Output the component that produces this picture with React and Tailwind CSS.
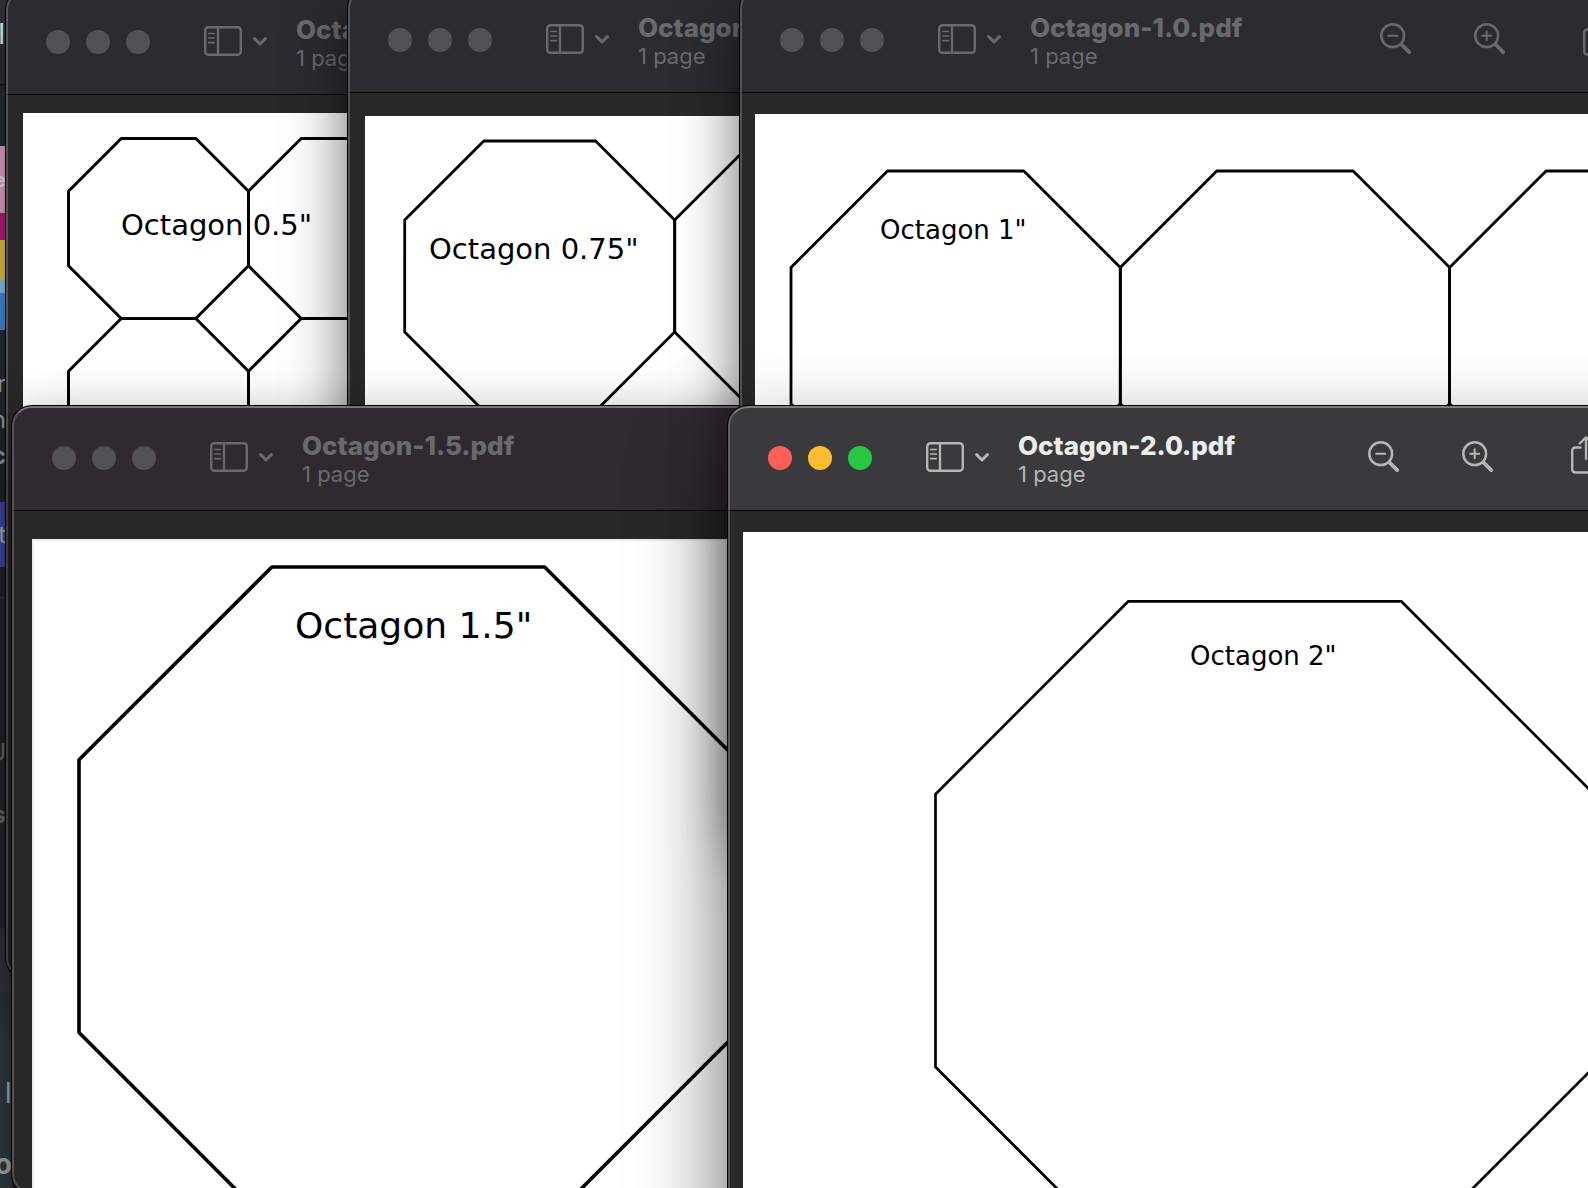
import clsx from "clsx";

const windows = [
  {
    title: "Octagon-0.5.pdf",
    frame: "left-[6px] top-[-10px] w-[900px] h-[988px]",
    bar: "bg-[#2b2c31]",
    inset: "pl-[17px] pt-[18px]",
    sheet: { x: 45.5, y: 25.5, size: 180, cols: 4, rows: 5, stroke: 3 },
    label: { text: 'Octagon 0.5"', x: 98, y: 122, size: 29 },
  },
  {
    title: "Octagon-0.75.pdf",
    frame: "left-[348px] top-[-12px] w-[900px] h-[842px]",
    bar: "bg-[#2b2c31]",
    inset: "pl-[17px] pt-[23px]",
    sheet: { x: 39.7, y: 25, size: 270, cols: 3, rows: 3, stroke: 2.8 },
    label: { text: 'Octagon 0.75"', x: 64, y: 143, size: 29 },
  },
  {
    title: "Octagon-1.5.pdf",
    frame: "left-3 top-[406px] w-[1300px] h-[788px]",
    bar: "bg-[#302a30]",
    inset: "pl-5 pt-7",
    page: "border-l-2 border-t-2 border-[#ededed]",
    sheet: { x: 45, y: 26, size: 658.4, cols: 1, rows: 1, stroke: 3.6 },
    label: { text: 'Octagon 1.5"', x: 261, y: 97, size: 36 },
  },
  {
    title: "Octagon-1.0.pdf",
    frame: "left-[740px] top-[-12px] w-[1200px] h-[842px]",
    bar: "bg-[#2c2b2f]",
    inset: "pl-[15px] pt-[21px]",
    sheet: { x: 36, y: 57, size: 329.3, cols: 3, rows: 2, stroke: 2.8 },
    label: { text: 'Octagon 1"', x: 125, y: 125, size: 26 },
  },
  {
    title: "Octagon-2.0.pdf",
    active: true,
    frame: "left-[728px] top-[406px] w-[1200px] h-[1000px]",
    bar: "bg-[#3a3a3c]",
    inset: "pl-[15px] pt-[21px]",
    sheet: { x: 192.5, y: 69.3, size: 658.6, cols: 1, rows: 1, stroke: 2.7 },
    label: { text: 'Octagon 2"', x: 447, y: 133, size: 26 },
  },
];

function SidebarIcon() {
  return (
    <svg width="38" height="30" viewBox="0 0 38 30" fill="none" stroke="currentColor">
      <rect x="1.2" y="1.2" width="35.6" height="27.6" rx="3.4" strokeWidth="2.4" />
      <path d="M14 1.5v27" strokeWidth="2.3" />
      <path d="M4.8 7.5h5.4M4.8 12h5.4M4.8 16.6h5.4" strokeWidth="1.7" strokeLinecap="round" />
    </svg>
  );
}

function ChevronIcon() {
  return (
    <svg width="14" height="9" viewBox="0 0 14 9" fill="none" stroke="currentColor">
      <path d="M1.6 1.6 7 7l5.4-5.4" strokeWidth="3" strokeLinecap="round" strokeLinejoin="round" />
    </svg>
  );
}

function ZoomIcon({ plus }) {
  return (
    <svg width="32" height="32" viewBox="0 0 32 32" fill="none" stroke="currentColor" strokeLinecap="round">
      <circle cx="12.7" cy="12.7" r="11.4" strokeWidth="2.5" />
      <path d="M21.5 21.5 29.2 29.2" strokeWidth="3.8" />
      <path d={plus ? "M8.2 12.7h9M12.7 8.2v9" : "M8.2 12.7h9"} strokeWidth="2" />
    </svg>
  );
}

function ShareIcon() {
  return (
    <svg width="30" height="38" viewBox="0 0 30 38" fill="none" stroke="currentColor" strokeLinecap="round" strokeLinejoin="round">
      <path d="M9.5 11.5H4.5a3.3 3.3 0 0 0-3.3 3.3v18.4a3.3 3.3 0 0 0 3.3 3.3h21a3.3 3.3 0 0 0 3.3-3.3V14.8a3.3 3.3 0 0 0-3.3-3.3h-5" strokeWidth="2.4" />
      <path d="M15 23V1.5M8.8 7.5 15 1.3l6.2 6.2" strokeWidth="2.3" />
    </svg>
  );
}

function octagon(x, y, s) {
  const c = s * 0.2929;
  return [
    [x + c, y], [x + s - c, y], [x + s, y + c], [x + s, y + s - c],
    [x + s - c, y + s], [x + c, y + s], [x, y + s - c], [x, y + c],
  ].join(" ");
}

function Sheet({ sheet, label }) {
  const cells = [];
  for (let r = 0; r < sheet.rows; r++) {
    for (let c = 0; c < sheet.cols; c++) {
      cells.push(octagon(sheet.x + c * sheet.size, sheet.y + r * sheet.size, sheet.size));
    }
  }
  return (
    <svg className="block w-full h-full">
      <g fill="none" stroke="#000" strokeWidth={sheet.stroke} strokeLinejoin="round">
        {cells.map((points) => (
          <polygon key={points} points={points} />
        ))}
      </g>
      <text x={label.x} y={label.y} fontSize={label.size} fontFamily="Verdana, 'DejaVu Sans', sans-serif">
        {label.text}
      </text>
    </svg>
  );
}

function TrafficLights({ active }) {
  const lights = [
    ["Close", "bg-[#ff5f57]"],
    ["Minimize", "bg-[#febc2e]"],
    ["Zoom", "bg-[#28c840]"],
  ];
  return (
    <div className="flex shrink-0 gap-4">
      {lights.map(([name, color]) => (
        <button key={name} aria-label={name} className={clsx("size-6 rounded-full", active ? color : "bg-[#525156]")} />
      ))}
    </div>
  );
}

function PreviewWindow({ title, active, frame, bar, inset, page, sheet, label }) {
  const wide = title === "Octagon-1.5.pdf";

  return (
    <section
      className={clsx(
        "absolute flex flex-col overflow-hidden rounded-[20px] bg-[#282828]",
        frame,
        active
          ? "shadow-[0_0_0_1px_#000,0_42px_90px_rgba(0,0,0,0.62)]"
          : "shadow-[0_0_0_1px_#000,0_24px_60px_rgba(0,0,0,0.6)]"
      )}
    >
      <header
        className={clsx(
          "flex h-[105px] shrink-0 items-center border-b border-black pl-10",
          bar,
          active ? "text-[#b6b6b7]" : "text-[#6a696d]"
        )}
      >
        <TrafficLights active={active} />
        <button aria-label="Sidebar" className="ml-[54px] flex shrink-0 items-center gap-[11px] pb-0.5">
          <SidebarIcon />
          <ChevronIcon />
        </button>
        <div className={clsx("ml-[29px] shrink-0 pt-1", wide ? "w-[550px]" : "w-[350px]")}>
          <h2 className={clsx("text-[26px] leading-[29px] font-extrabold", active && "text-[#ececec]")}>{title}</h2>
          <p className="text-[22px] leading-[29px]">1 page</p>
        </div>
        <div className="flex shrink-0 items-center pb-0.5">
          <button aria-label="Zoom out"><ZoomIcon /></button>
          <button aria-label="Zoom in" className="ml-[62px]"><ZoomIcon plus /></button>
          <button aria-label="Share" className="ml-[77px] pb-1"><ShareIcon /></button>
        </div>
      </header>
      <div className={clsx("min-h-0 flex-1", inset)}>
        <div className={clsx("h-full bg-white", page)}>
          <Sheet sheet={sheet} label={label} />
        </div>
      </div>
      {/* light rim drawn over the whole frame */}
      <div className="pointer-events-none absolute inset-0 rounded-[20px] border-2 border-white/20 border-t-white/35" />
    </section>
  );
}

// Sliver of the browser that stays visible at the left edge of the desktop
function BackgroundApp() {
  return (
    <aside className="flex h-full w-3 flex-col overflow-hidden bg-[#2c3037] text-[#c4c5c8]">
      <div className="flex h-[84px] w-[5px] shrink-0 items-center justify-end overflow-hidden bg-[#323338] pb-4 text-[28px] text-white">rl</div>
      <div className="h-[62px] shrink-0 border-t border-[#1b1c20]" />
      <div className="flex h-[184px] w-1.5 shrink-0 flex-col">
        <div className="flex h-[67px] items-center justify-end overflow-hidden bg-[#ffb2e2] text-xl font-bold text-white">e</div>
        <div className="h-[27px] bg-[#d41890]" />
        <div className="h-10 bg-[#ffdc3a]" />
        <div className="h-[13px] bg-[#90e2ff]" />
        <div className="h-[37px] bg-[#429ff8]" />
      </div>
      <div className="flex h-[172px] w-1.5 shrink-0 flex-col items-end overflow-hidden pt-9 text-2xl leading-9">
        <span>r</span>
        <span>n</span>
        <span className="font-bold">c</span>
      </div>
      <div className="flex h-[65px] w-1.5 shrink-0 items-center justify-end overflow-hidden bg-[#5866e0] text-2xl text-[#f0f0ff]">t</div>
      <div className="h-[31px] shrink-0 border-b border-[#44464b]" />
      <div className="flex h-[330px] w-1.5 shrink-0 flex-col items-end overflow-hidden bg-[#303238] pt-[124px] text-2xl leading-[62px] text-[#96979c]">
        <span>U</span>
        <span className="font-bold">s</span>
      </div>
      <div className="h-16 shrink-0 bg-[#42454e]" />
      <div className="flex min-h-[196px] w-3 flex-1 flex-col items-end overflow-hidden bg-[#353d43] pt-[66px] text-[28px] leading-[71px] text-[#b0b2b6]">
        <span>I</span>
        <span className="font-bold">So</span>
      </div>
    </aside>
  );
}

export default function App() {
  return (
    <main className="relative h-screen overflow-hidden bg-[#22252a] font-['Inter',sans-serif]">
      <BackgroundApp />
      {windows.map((win) => (
        <PreviewWindow key={win.title} {...win} />
      ))}
    </main>
  );
}
